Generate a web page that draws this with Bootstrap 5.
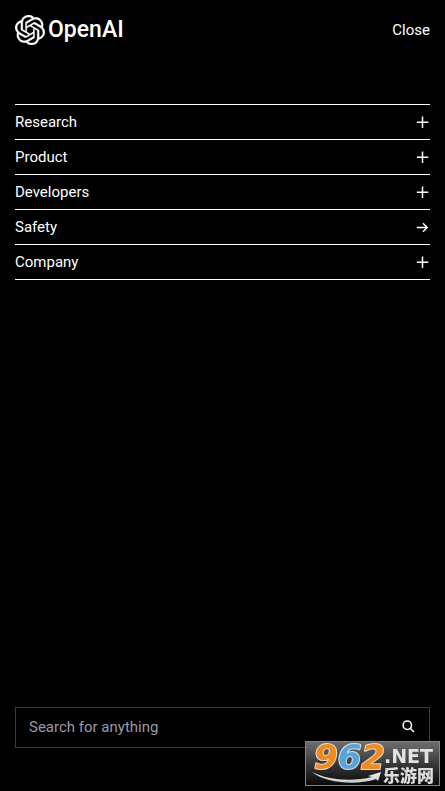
<!DOCTYPE html>
<html lang="en" data-bs-theme="dark">
<head>
<meta charset="utf-8">
<meta name="viewport" content="width=device-width, initial-scale=1">
<title>OpenAI</title>
<link href="https://cdn.jsdelivr.net/npm/bootstrap@5.3.0/dist/css/bootstrap.min.css" rel="stylesheet">
<style>
  body { background: #000; color: #fff; font-family: Roboto, "Liberation Sans", sans-serif; font-size: 15px; line-height: 20px; }
  .page { padding: 15px 15px 43px; }
  .wordmark { font-weight: 500; font-size: 23px; line-height: 30px; gap: 3px; }
  .menu { margin-top: 59px; border-top: 1px solid #fff; }
  .menu-row { height: 35px; border: 0; border-bottom: 1px solid #fff; background: none; padding: 0 1px 0 0; }
  .search-box { height: 41px; border: 1px solid #3a3a3a; padding: 0 14px 2px 13px; }
  .search-box input { color: #fff; height: 24px; line-height: 24px; outline: 0; }
  .search-box input::placeholder { color: #9a9aa6; opacity: 1; }
  .stamp { right: 5px; bottom: 5px; overflow: visible; }
  .digits { font: italic bold 34px "DejaVu Sans", sans-serif; }
  .domain { font: bold 19px "DejaVu Sans", sans-serif; }
  .site-name { font: 900 17px "Noto Sans CJK SC", sans-serif; }
</style>
<script src="https://cdn.jsdelivr.net/npm/bootstrap@5.3.0/dist/js/bootstrap.bundle.min.js"></script>
</head>
<body>
<svg class="d-none" aria-hidden="true">
  <symbol id="plus" viewBox="0 0 13 13"><path d="M6.500 .5v11.500M.8 6.200h11.500" fill="none" stroke="#fff" stroke-width="1.500"/></symbol>
  <symbol id="arrow" viewBox="0 0 13 13"><path d="M.8 6.500h10.500M7 2.300l4.200 4.200L7 10.700" fill="none" stroke="#fff" stroke-width="1.500"/></symbol>
</svg>
<div class="page d-flex flex-column min-vh-100">
  <header class="d-flex align-items-center justify-content-between">
    <a href="#" class="wordmark d-flex align-items-center text-white text-decoration-none">
      <svg width="30" height="30" viewBox="0 0 24 24" fill="#fff" stroke="#fff" stroke-width=".2" aria-hidden="true"><path d="M22.2819 9.8211a5.9847 5.9847 0 0 0-.5157-4.9108 6.0462 6.0462 0 0 0-6.5098-2.9A6.0651 6.0651 0 0 0 4.9807 4.1818a5.9847 5.9847 0 0 0-3.9977 2.9 6.0462 6.0462 0 0 0 .7427 7.0966 5.98 5.98 0 0 0 .511 4.9107 6.051 6.051 0 0 0 6.5146 2.9001A5.9847 5.9847 0 0 0 13.2599 24a6.0557 6.0557 0 0 0 5.7718-4.2058 5.9894 5.9894 0 0 0 3.9977-2.9001 6.0557 6.0557 0 0 0-.7475-7.0729zm-9.022 12.6081a4.4755 4.4755 0 0 1-2.8764-1.0408l.1419-.0804 4.7783-2.7582a.7948.7948 0 0 0 .3927-.6813v-6.7369l2.02 1.1686a.071.071 0 0 1 .038.052v5.5826a4.504 4.504 0 0 1-4.4945 4.4944zm-9.6607-4.1254a4.4708 4.4708 0 0 1-.5346-3.0137l.142.0852 4.783 2.7582a.7712.7712 0 0 0 .7806 0l5.8428-3.3685v2.3324a.0804.0804 0 0 1-.0332.0615L9.74 19.9502a4.4992 4.4992 0 0 1-6.1408-1.6464zM2.3408 7.8956a4.485 4.485 0 0 1 2.3655-1.9728V11.6a.7664.7664 0 0 0 .3879.6765l5.8144 3.3543-2.0201 1.1685a.0757.0757 0 0 1-.071 0l-4.8303-2.7865A4.504 4.504 0 0 1 2.3408 7.872zm16.5963 3.8558L13.1038 8.364 15.1192 7.2a.0757.0757 0 0 1 .071 0l4.8303 2.7913a4.4944 4.4944 0 0 1-.6765 8.1042v-5.6772a.79.79 0 0 0-.407-.667zm2.0107-3.0231l-.142-.0852-4.7735-2.7818a.7759.7759 0 0 0-.7854 0L9.409 9.2297V6.8974a.0662.0662 0 0 1 .0284-.0615l4.8303-2.7866a4.4992 4.4992 0 0 1 6.6802 4.66zM8.3065 12.863l-2.02-1.1638a.0804.0804 0 0 1-.038-.0567V6.0742a4.4992 4.4992 0 0 1 7.3757-3.4537l-.142.0805L8.704 5.459a.7948.7948 0 0 0-.3927.6813zm1.0976-2.3654l2.602-1.4998 2.6069 1.4998v2.9994l-2.5974 1.4997-2.6067-1.4997Z"/></svg>
      <span>OpenAI</span>
    </a>
    <button type="button" class="border-0 bg-transparent p-0 text-white">Close</button>
  </header>

  <nav class="menu d-flex flex-column" aria-label="Main">
    <button type="button" class="menu-row d-flex align-items-center justify-content-between text-white"><span>Research</span><svg width="13" height="13" aria-hidden="true"><use href="#plus"/></svg></button>
    <button type="button" class="menu-row d-flex align-items-center justify-content-between text-white"><span>Product</span><svg width="13" height="13" aria-hidden="true"><use href="#plus"/></svg></button>
    <button type="button" class="menu-row d-flex align-items-center justify-content-between text-white"><span>Developers</span><svg width="13" height="13" aria-hidden="true"><use href="#plus"/></svg></button>
    <a href="#" class="menu-row d-flex align-items-center justify-content-between text-white text-decoration-none"><span>Safety</span><svg width="13" height="13" aria-hidden="true"><use href="#arrow"/></svg></a>
    <button type="button" class="menu-row d-flex align-items-center justify-content-between text-white"><span>Company</span><svg width="13" height="13" aria-hidden="true"><use href="#plus"/></svg></button>
  </nav>

  <form class="search-box d-flex align-items-center mt-auto" role="search">
    <label for="search" class="visually-hidden">Search</label>
    <input id="search" type="text" class="flex-grow-1 border-0 bg-transparent p-0" placeholder="Search for anything">
    <button type="submit" class="d-flex border-0 bg-transparent p-0" aria-label="Submit search">
      <svg width="13" height="13" viewBox="0 0 13 13" fill="none" stroke="#fff" stroke-width="1.500" aria-hidden="true"><circle cx="5.300" cy="5.300" r="4.200"/><path d="M8.300 8.300l3.700 3.700"/></svg>
    </button>
  </form>
</div>

<svg class="stamp position-fixed" width="135" height="45" viewBox="0 0 135 45" role="img" aria-label="962.NET">
  <defs>
    <linearGradient id="plate" x2="0" y2="1"><stop offset="0" stop-color="#777" stop-opacity=".93"/><stop offset=".5" stop-color="#3c3c3c" stop-opacity=".95"/><stop offset="1" stop-color="#080808"/></linearGradient>
    <linearGradient id="silver" x2="0" y2="1"><stop offset="0" stop-color="#f2f2f2"/><stop offset="1" stop-color="#c8c8c8"/></linearGradient>
  </defs>
  <rect x=".5" y=".5" width="134" height="44" fill="url(#plate)" stroke="#858585"/>
  <path d="M7 31c15 8 40 10 60 5l-4-1 13-4-3 9-2-2c-20 7-50 4-64-7z" fill="url(#silver)"/>
  <text class="digits" x="9" y="28" stroke="#e4ddd2" stroke-width="2" stroke-linejoin="round" paint-order="stroke"><tspan fill="#ee8a20">9</tspan><tspan fill="#55a5dc">6</tspan><tspan fill="#ee8a20">2</tspan></text>
  <text class="domain" x="79" y="22" fill="#e2e2e2">.NET</text>
  <text class="site-name" x="78" y="41" fill="#dcdcdc">乐游网</text>
</svg>
</body>
</html>
